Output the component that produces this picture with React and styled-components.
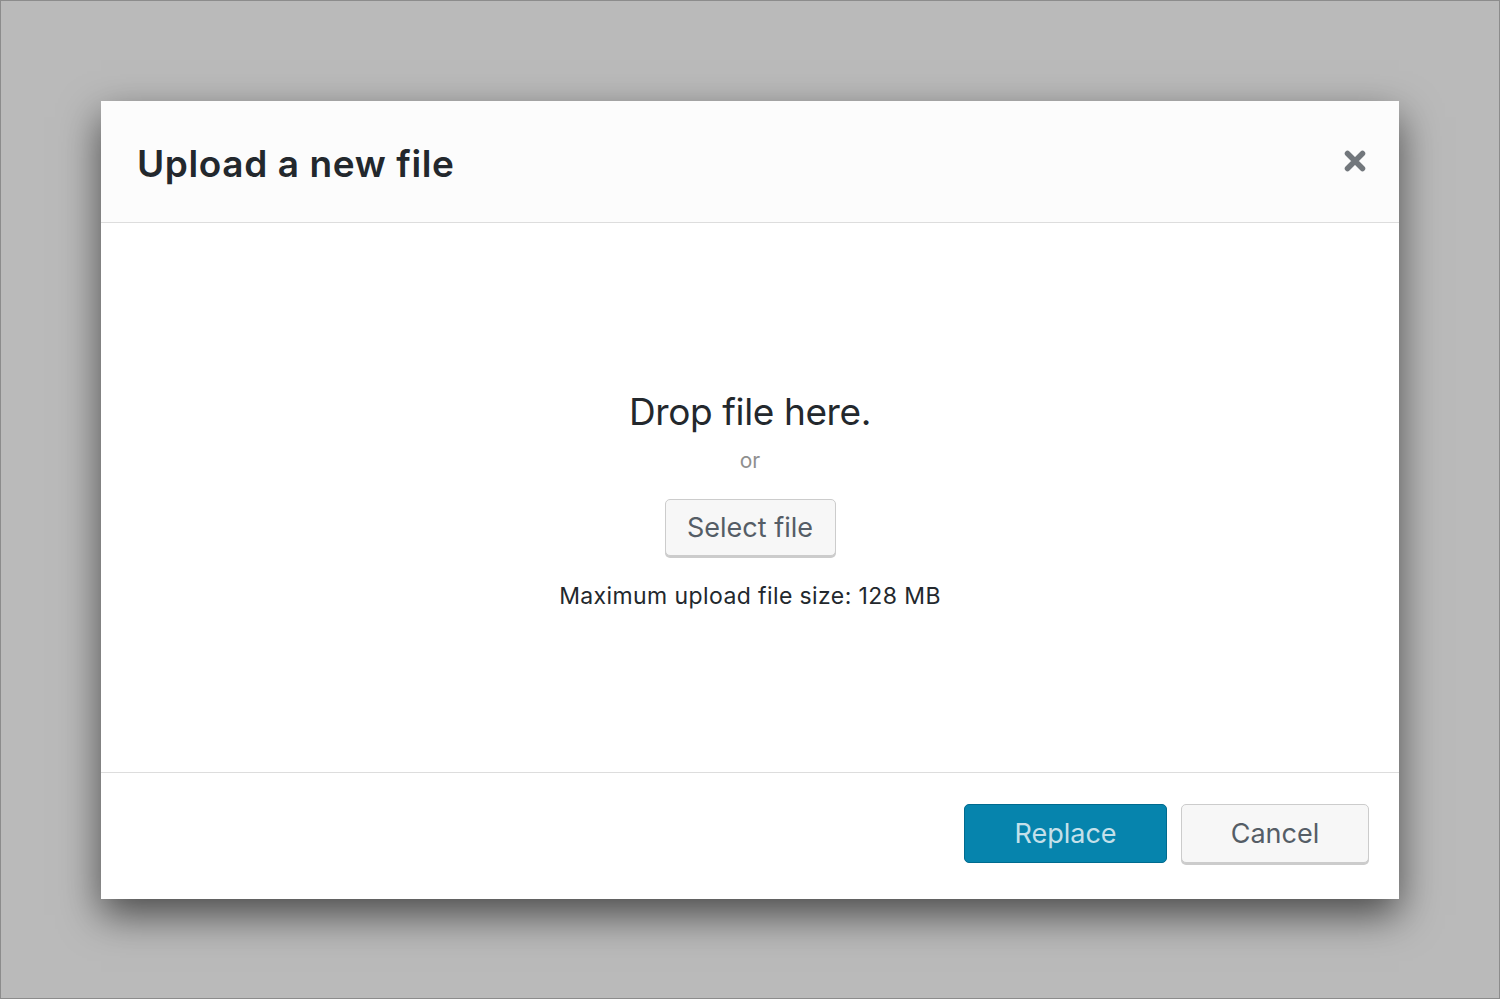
import React from "react";
import styled, { createGlobalStyle } from "styled-components";

const GlobalStyle = createGlobalStyle`
  html, body {
    margin: 0;
    padding: 0;
  }
  body {
    font-family: Inter, "Open Sans", "Liberation Sans", sans-serif;
    -webkit-font-smoothing: antialiased;
  }
  * { box-sizing: border-box; }
`;

const Backdrop = styled.div`
  width: 1500px;
  height: 999px;
  background: #bababa;
  border: 1px solid #8c8c8c;
  display: flex;
  align-items: center;
  justify-content: center;
`;

const Modal = styled.div`
  width: 1298px;
  height: 798px;
  background: #fff;
  box-shadow: 0 16px 38px rgba(0, 0, 0, 0.6);
  display: flex;
  flex-direction: column;
`;

const Header = styled.div`
  height: 122px;
  flex: none;
  background: #fcfcfc;
  border-bottom: 1px solid #dddddd;
  display: flex;
  align-items: center;
  justify-content: space-between;
  padding: 4px 32px 0 36px;
`;

const Title = styled.h1`
  margin: 0;
  font-size: 37px;
  font-weight: 600;
  color: #23282d;
  letter-spacing: 0.6px;
`;

const CloseButton = styled.button`
  border: 0;
  background: none;
  padding: 0;
  width: 24px;
  height: 24px;
  margin-top: -4px;
  display: flex;
  align-items: center;
  justify-content: center;
  cursor: pointer;
`;

const Body = styled.div`
  flex: 1;
  display: flex;
  flex-direction: column;
  align-items: center;
  justify-content: center;
  padding-top: 4px;
`;

const DropText = styled.p`
  margin: 0;
  font-size: 37px;
  font-weight: 400;
  color: #23282d;
  letter-spacing: -0.4px;
`;

const OrText = styled.p`
  margin: 14px 0 26px;
  font-size: 21px;
  color: #8f8f8f;
`;

const Button = styled.button`
  font-family: inherit;
  height: ${(p) => p.$h || 57}px;
  padding: 0 ${(p) => p.$px || 20}px;
  min-width: ${(p) => p.$w || 0}px;
  font-size: ${(p) => p.$fs || 27}px;
  border-radius: 5px;
  cursor: pointer;
  border: 1px solid ${(p) => (p.$primary ? "#006b8f" : "#cccccc")};
  background: ${(p) => (p.$primary ? "#0684ad" : "#f7f7f7")};
  color: ${(p) => (p.$primary ? "#c4e0ea" : "#555d66")};
  box-shadow: ${(p) => (p.$primary ? "none" : "0 2px 0 #cccccc")};
`;

const SizeNote = styled.p`
  margin: 26px 0 0;
  font-size: 23px;
  color: #23282d;
  letter-spacing: 0.4px;
`;

const Footer = styled.div`
  height: 127px;
  flex: none;
  border-top: 1px solid #dddddd;
  display: flex;
  align-items: center;
  justify-content: flex-end;
  gap: 14px;
  padding: 0 30px 4px 0;
`;

const CloseIcon = () => (
  <svg width="24" height="24" viewBox="0 0 24 24">
    <path
      d="M4.5 4.5 L19.5 19.5 M19.5 4.5 L4.5 19.5"
      stroke="#72777c"
      strokeWidth="5.5"
      strokeLinecap="round"
    />
  </svg>
);

export default function App() {
  return (
    <>
      <GlobalStyle />
      <Backdrop>
        <Modal>
          <Header>
            <Title>Upload a new file</Title>
            <CloseButton aria-label="Close">
              <CloseIcon />
            </CloseButton>
          </Header>
          <Body>
            <DropText>Drop file here.</DropText>
            <OrText>or</OrText>
            <Button $w={171}>Select file</Button>
            <SizeNote>Maximum upload file size: 128 MB</SizeNote>
          </Body>
          <Footer>
            <Button $primary $w={203} $h={59}>
              Replace
            </Button>
            <Button $w={188} $h={59}>
              Cancel
            </Button>
          </Footer>
        </Modal>
      </Backdrop>
    </>
  );
}
